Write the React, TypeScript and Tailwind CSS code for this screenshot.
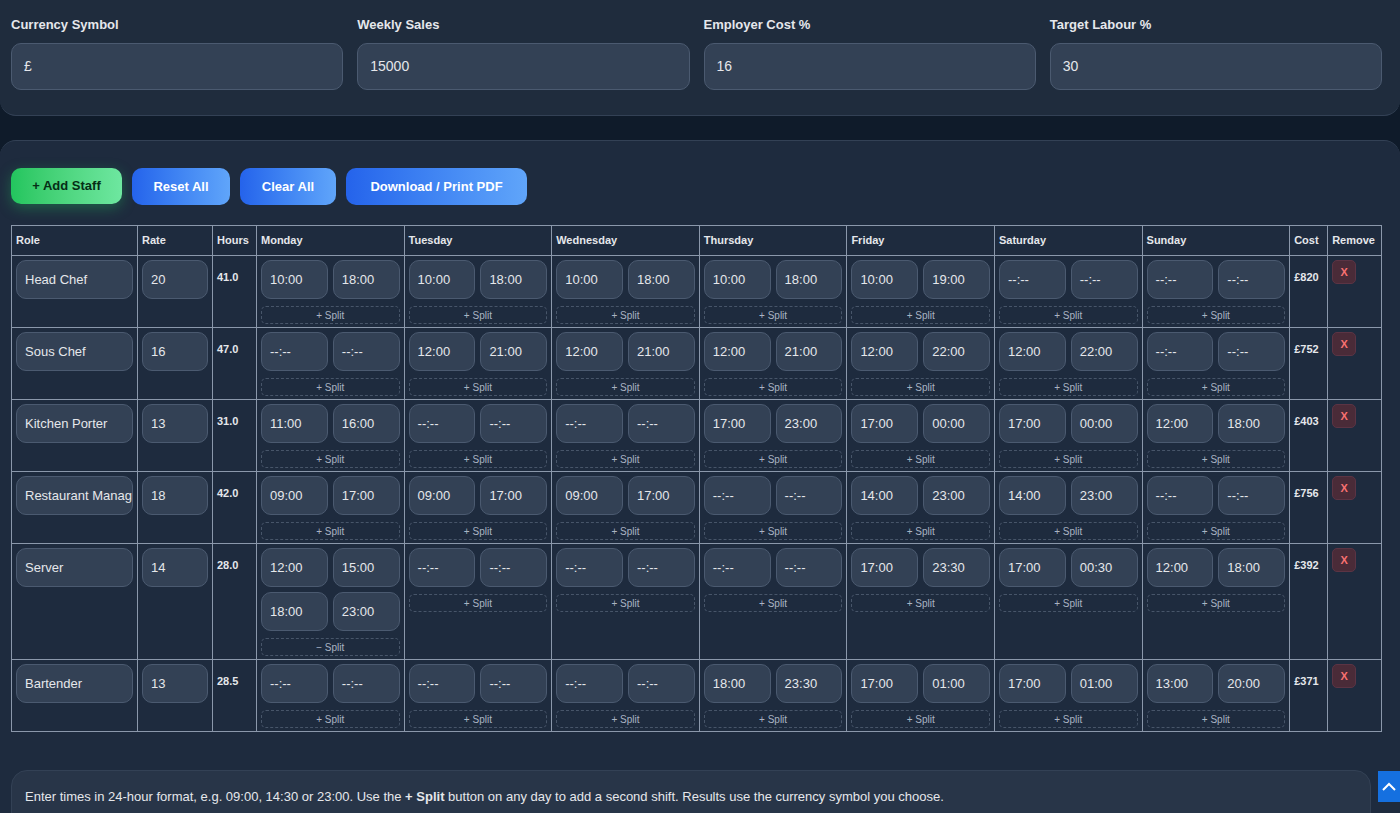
import React from "react";

type Row = { role: string; rate: string; hours: string; cost: string; days: string[][][] };

const E = ["--:--", "--:--"];
const rows: Row[] = [
  { role: "Head Chef", rate: "20", hours: "41.0", cost: "£820", days: [[["10:00", "18:00"]], [["10:00", "18:00"]], [["10:00", "18:00"]], [["10:00", "18:00"]], [["10:00", "19:00"]], [E], [E]] },
  { role: "Sous Chef", rate: "16", hours: "47.0", cost: "£752", days: [[E], [["12:00", "21:00"]], [["12:00", "21:00"]], [["12:00", "21:00"]], [["12:00", "22:00"]], [["12:00", "22:00"]], [E]] },
  { role: "Kitchen Porter", rate: "13", hours: "31.0", cost: "£403", days: [[["11:00", "16:00"]], [E], [E], [["17:00", "23:00"]], [["17:00", "00:00"]], [["17:00", "00:00"]], [["12:00", "18:00"]]] },
  { role: "Restaurant Manager", rate: "18", hours: "42.0", cost: "£756", days: [[["09:00", "17:00"]], [["09:00", "17:00"]], [["09:00", "17:00"]], [E], [["14:00", "23:00"]], [["14:00", "23:00"]], [E]] },
  { role: "Server", rate: "14", hours: "28.0", cost: "£392", days: [[["12:00", "15:00"], ["18:00", "23:00"]], [E], [E], [E], [["17:00", "23:30"]], [["17:00", "00:30"]], [["12:00", "18:00"]]] },
  { role: "Bartender", rate: "13", hours: "28.5", cost: "£371", days: [[E], [E], [E], [["18:00", "23:30"]], [["17:00", "01:00"]], [["17:00", "01:00"]], [["13:00", "20:00"]]] },
];
const dayNames = ["Monday", "Tuesday", "Wednesday", "Thursday", "Friday", "Saturday", "Sunday"];

const box = "h-[39px] rounded-[10px] border border-[#4b5a70] bg-[#334155] text-[13px] text-[#e5e7eb] flex items-center px-[8px]";
const cell = "border border-[#8b98ab] align-top";
const bold = "font-[Arial_Black,Liberation_Sans,sans-serif] font-bold";

function Field({ label, value }: { label: string; value: string }) {
  return (
    <div className="flex flex-col">
      <div className={"text-[13px] text-[#e5e7eb] mb-[8px] " + bold}>{label}</div>
      <div className="h-[47px] rounded-[10px] border border-[#4b5a70] bg-[#334155] flex items-center px-[12px] text-[14px] text-[#e5e7eb]">{value}</div>
    </div>
  );
}

export default function App() {
  return (
    <div className="h-[813px] overflow-hidden bg-[#0f1b2a] font-[Liberation_Sans,Arial,sans-serif]">
      <div className="h-[116px] bg-[#1f2c3d] border-b border-[#334155] rounded-b-[16px] px-[11px] pt-[15px] grid grid-cols-4 gap-[14px] pr-[18px]">
        <Field label="Currency Symbol" value="£" />
        <Field label="Weekly Sales" value="15000" />
        <Field label="Employer Cost %" value="16" />
        <Field label="Target Labour %" value="30" />
      </div>
      <div className="mt-[24px] bg-[#1e2b3e] border-t border-[#334155] rounded-t-[16px] px-[11px] pt-[27px] h-[700px] relative">
        <div className={"flex gap-[10px] text-[13px] " + bold}>
          <div className="h-[36px] px-[17px] w-[111px] justify-center rounded-[10px] bg-gradient-to-r from-[#22c55e] to-[#6ee7a0] text-[#052e16] flex items-center shadow-[0_4px_14px_rgba(34,197,94,0.35)]">+ Add Staff</div>
          <div className="h-[37px] w-[98px] justify-center rounded-[10px] bg-gradient-to-r from-[#2563eb] to-[#60a5fa] text-white flex items-center">Reset All</div>
          <div className="h-[37px] w-[96px] justify-center rounded-[10px] bg-gradient-to-r from-[#2563eb] to-[#60a5fa] text-white flex items-center">Clear All</div>
          <div className="h-[37px] w-[181px] justify-center rounded-[10px] bg-gradient-to-r from-[#2563eb] to-[#60a5fa] text-white flex items-center">Download / Print PDF</div>
        </div>
        <table className="mt-[20px] border-collapse table-fixed w-[1371px] text-[#e5e7eb]">
          <colgroup>
            <col className="w-[126px]" /><col className="w-[75px]" /><col className="w-[44px]" />
            {dayNames.map((d) => <col key={d} className="w-[147.6px]" />)}
            <col className="w-[38px]" /><col className="w-[54px]" />
          </colgroup>
          <thead>
            <tr className="h-[30px] text-[11px] font-bold text-left">
              {["Role", "Rate", "Hours", ...dayNames, "Cost", "Remove"].map((h) => (
                <th key={h} className="border border-[#8b98ab] px-[4px] align-middle">{h}</th>
              ))}
            </tr>
          </thead>
          <tbody>
            {rows.map((r) => (
              <tr key={r.role}>
                <td className={cell + " p-[4px]"}><div className={box + " whitespace-nowrap overflow-hidden"}>{r.role}</div></td>
                <td className={cell + " p-[4px]"}><div className={box}>{r.rate}</div></td>
                <td className={cell + " px-[4px] pt-[13px] text-[11px] " + bold}>{r.hours}</td>
                {r.days.map((shifts, i) => (
                  <td key={i} className={cell + " p-[4px] pb-[3px]"}>
                    <div className="flex flex-col gap-[5px]">
                      {shifts.map((s, j) => (
                        <div key={j} className="grid grid-cols-2 gap-[5px]">
                          <div className={box}>{s[0]}</div>
                          <div className={box}>{s[1]}</div>
                        </div>
                      ))}
                      <div className="mt-[2px] h-[18px] rounded-[5px] border border-dashed border-[#475569] text-[10px] text-[#aab4c3] flex items-center justify-center">
                        {shifts.length > 1 ? "− Split" : "+ Split"}
                      </div>
                    </div>
                  </td>
                ))}
                <td className={cell + " px-[4px] pt-[13px] text-[11px] " + bold}>{r.cost}</td>
                <td className={cell + " p-[4px]"}>
                  <div className="w-[24px] h-[24px] rounded-[5px] bg-[#4a2b38] border border-[#5b3444] text-[#f87171] text-[11px] font-bold flex items-center justify-center">X</div>
                </td>
              </tr>
            ))}
          </tbody>
        </table>
        <div className="mt-[38px] mr-[18px] h-[60px] rounded-[16px] bg-[#283548] border border-[#334155] px-[13px] pt-[16px] text-[13px] text-[#e5e7eb]">
          Enter times in 24-hour format, e.g. 09:00, 14:30 or 23:00. Use the <b>+ Split</b> button on any day to add a second shift. Results use the currency symbol you choose.
        </div>
        <div className="absolute right-0 top-[630px] w-[22px] h-[31px] bg-[#1570e0] flex items-center justify-center">
          <svg width="16" height="10" viewBox="0 0 16 10" fill="none" stroke="white" strokeWidth="2"><path d="M2 8l6-6 6 6" /></svg>
        </div>
      </div>
    </div>
  );
}
